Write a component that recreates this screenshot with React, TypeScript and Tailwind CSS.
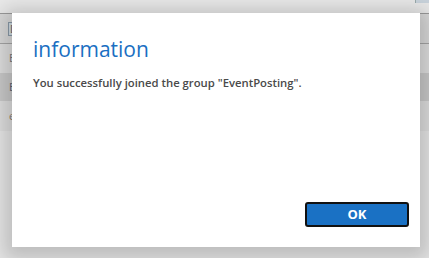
import React from "react";

export default function App() {
  return (
    <div
      className="relative w-[429px] h-[258px] overflow-hidden bg-[#e6e6e6]"
      style={{ fontFamily: '"Open Sans", "Noto Sans", sans-serif' }}
    >
      {/* background page */}
      <div className="flex flex-col">
        <div className="h-[14px] border-b border-[#9a9a9a] bg-[#e9e9e9] flex justify-end">
          <div className="w-[14px] h-[3px] bg-[#c9d3dc] border-l border-[#9aa]" />
        </div>
        <div className="h-[30px] border-b border-[#a5a5a5] bg-[#d9d9d9] flex items-center pl-[8px]">
          <span className="text-[11px] text-[#666] border border-[#8a9aa8] bg-[#cfdbe3] px-[1px] leading-[12px]">D</span>
        </div>
        <div className="h-[29px] bg-[#dedede] flex items-center pl-[9px] text-[11px] text-[#777]">E</div>
        <div className="h-[28px] bg-[#c9c9c9] flex items-center pl-[9px] text-[11px] text-[#5a6270]">E</div>
        <div className="h-[30px] bg-[#dedede] flex items-center pl-[9px] text-[11px] text-[#8a7a6a]">e</div>
      </div>

      {/* modal dialog */}
      <div className="absolute left-[12px] top-[13px] w-[408px] h-[234px] bg-white shadow-[0_4px_18px_8px_rgba(0,0,0,0.18)] flex flex-col">
        <div className="pl-[21px] pt-[22px]">
          <div className="text-[21px] leading-[28px] font-medium text-[#1a6fc2]">information</div>
          <div className="mt-[12px] text-[11.3px] leading-[15px] font-semibold text-[#4a4a4a]">
            You successfully joined the group "EventPosting".
          </div>
        </div>
        <div className="flex-1" />
        <div className="flex justify-end pr-[11px] pb-[20px]">
          <button className="w-[104px] h-[25px] rounded-[3px] border-2 border-[#111] bg-[#1a71c4] text-white text-[13px] font-bold flex items-center justify-center">
            OK
          </button>
        </div>
      </div>
    </div>
  );
}
